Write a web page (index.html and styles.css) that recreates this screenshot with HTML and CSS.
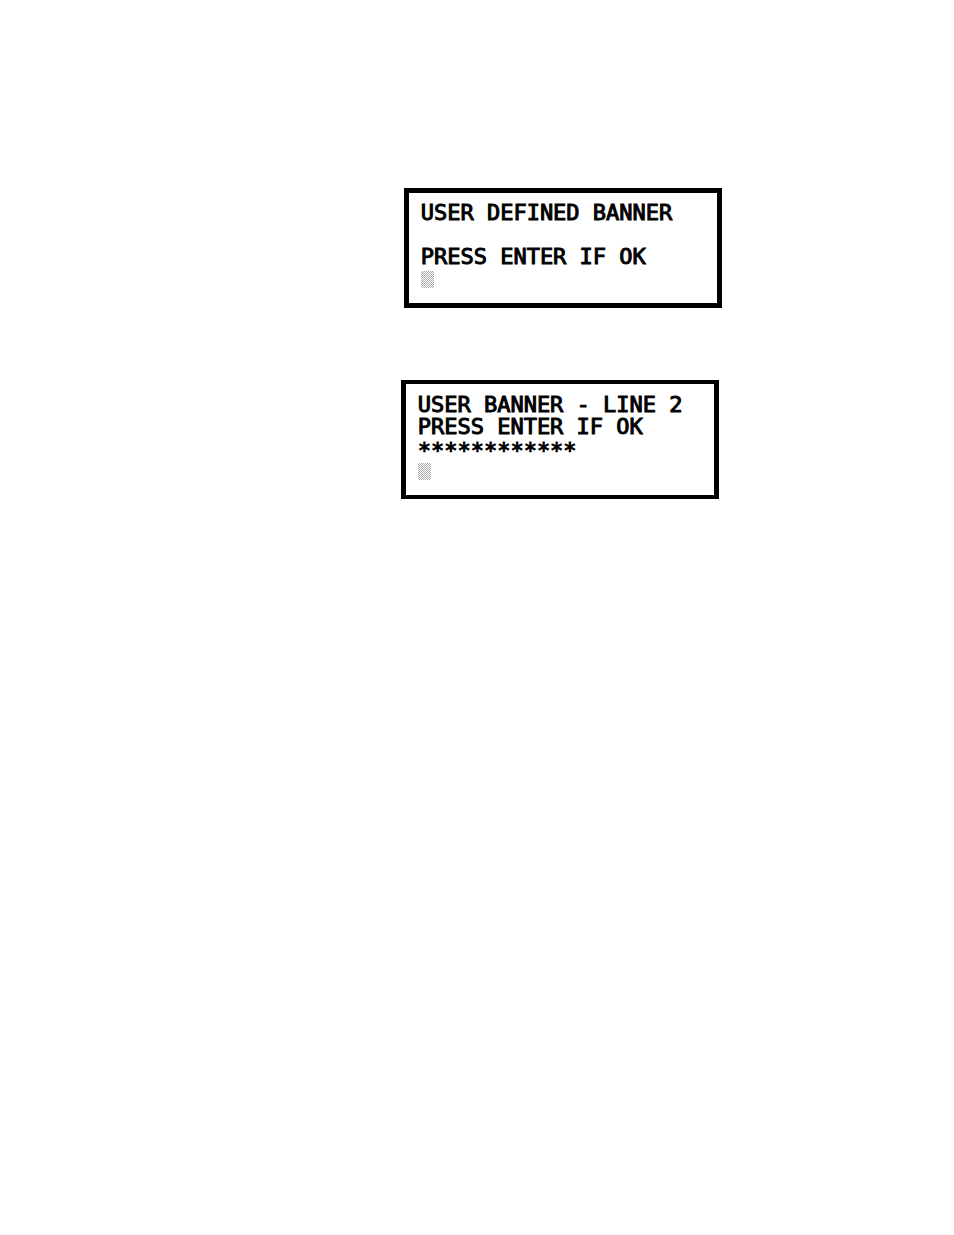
FILE: index.html
```html
<!DOCTYPE html>
<html lang="en">
<head>
<meta charset="utf-8">
<meta name="viewport" content="width=device-width, initial-scale=1">
<title>User Defined Banner</title>
<link rel="stylesheet" href="styles.css">
</head>
<body>
<main class="page">
  <section class="display display-entry">
    <p class="line">USER DEFINED BANNER</p>
    <p class="line"></p>
    <p class="line">PRESS ENTER IF OK</p>
    <p class="line"><span class="cursor"></span></p>
  </section>
  <section class="display display-second">
    <p class="line">USER BANNER - LINE 2</p>
    <p class="line">PRESS ENTER IF OK</p>
    <p class="line line-stars">************</p>
    <p class="line"><span class="cursor"></span></p>
  </section>
</main>
</body>
</html>
```
FILE: styles.css
```css
* {
  box-sizing: border-box;
}

body {
  margin: 0;
  background: #fff;
  color: #000;
}

.page {
  display: flex;
  flex-direction: column;
  align-items: flex-start;
  gap: 72px;
  padding: 188px 0 0 42%;
}

.display {
  width: 100%;
  max-width: 318px;
  padding: 9px 12px 13px;
  border: 5px solid #000;
  font-family: "DejaVu Sans Mono", monospace;
  font-size: 22px;
  line-height: 22px;
}

.display-entry {
  margin-left: 3px;
}

.display-second {
  padding-top: 10px;
  border-width: 4px 5px;
}

.line {
  display: flex;
  align-items: flex-end;
  height: 22px;
  margin: 0;
  white-space: nowrap;
  -webkit-text-stroke: 1px #000;
}

.line-stars {
  line-height: 18px;
}

/* Dithered block cursor */
.cursor {
  width: 13px;
  height: 17px;
  margin-bottom: 2px;
  background: repeating-conic-gradient(#aaa 0 25%, #fff 0 50%) 0 0 / 2px 2px;
}
```
